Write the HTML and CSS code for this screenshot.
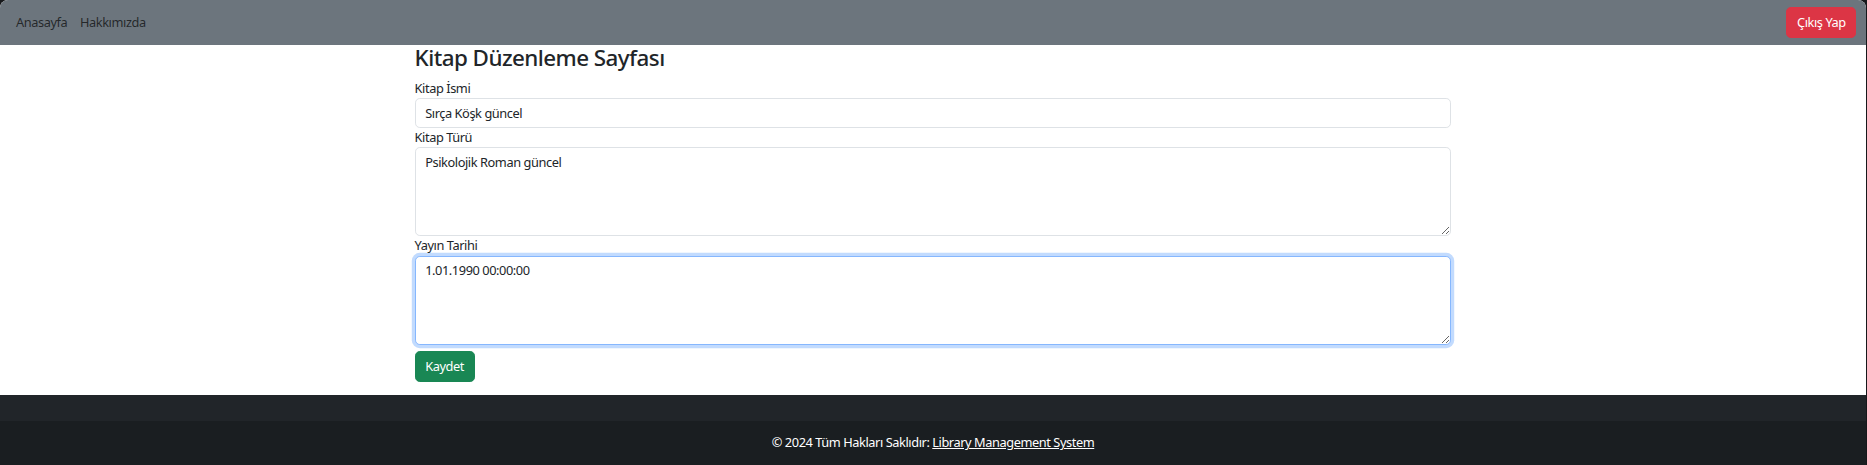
FILE: index.html
```html
<!DOCTYPE html>
<html lang="tr">
<head>
<meta charset="utf-8">
<title>Kitap Düzenleme Sayfası</title>
<link rel="stylesheet" href="styles.css">
</head>
<body>
<div class="page">
  <nav class="navbar">
    <ul class="nav">
      <li><a class="nav-link" href="#">Anasayfa</a></li>
      <li><a class="nav-link" href="#">Hakkımızda</a></li>
    </ul>
    <button class="btn btn-danger" type="button">Çıkış Yap</button>
  </nav>
  <main class="container">
    <h3 class="title">Kitap Düzenleme Sayfası</h3>
    <form class="form">
      <label class="label" for="isim">Kitap İsmi</label>
      <input class="control" id="isim" type="text" value="Sırça Köşk güncel">
      <label class="label" for="tur">Kitap Türü</label>
      <textarea class="control area" id="tur" rows="4">Psikolojik Roman güncel</textarea>
      <label class="label" for="tarih">Yayın Tarihi</label>
      <textarea class="control area" id="tarih" rows="4">1.01.1990 00:00:00</textarea>
      <button class="btn btn-success save" type="button">Kaydet</button>
    </form>
  </main>
  <footer class="footer">
    <div class="footer-top"></div>
    <div class="footer-bottom">© 2024 Tüm Hakları Saklıdır: <a class="footer-link" href="#">Library Management System</a></div>
  </footer>
</div>
<script src="script.js"></script>
</body>
</html>
```
FILE: styles.css
```css
* { box-sizing: border-box; }
html, body { margin: 0; padding: 0; }
body {
  background: #16181b;
  font-family: "Noto Sans", "Open Sans", sans-serif;
  font-size: 12.8px;
  line-height: 19.2px;
  letter-spacing: -0.43px;
  color: #212529;
  height: 465px;
  overflow: hidden;
}
.page {
  margin-right: 1px;
  background: #fff;
  border-radius: 8px 8px 0 0;
  overflow: hidden;
  min-height: 465px;
  display: flex;
  flex-direction: column;
}
.navbar {
  background: #6c757d;
  height: 44.8px;
  padding: 6.4px 9.6px;
  display: flex;
  align-items: center;
  justify-content: space-between;
}
.nav {
  list-style: none;
  margin: 0;
  padding: 0;
  display: flex;
}
.nav-link {
  display: block;
  padding: 6.4px;
  color: rgba(0, 0, 0, 0.68);
  text-decoration: none;
}
.btn {
  font-family: inherit;
  font-size: 12.8px;
  line-height: 19.2px;
  letter-spacing: -0.43px;
  padding: 4.8px 9.6px;
  border: 0.8px solid transparent;
  border-radius: 4.8px;
  color: #fff;
  cursor: pointer;
}
.btn-danger { background: #dc3545; border-color: #dc3545; }
.btn-success { background: #198754; border-color: #198754; }
.container {
  width: 1036.8px;
  margin: 0 auto;
  padding-top: 0.6px;
  padding-bottom: 12.8px;
}
.title {
  margin: 0 0 6.4px;
  font-size: 22.4px;
  line-height: 1.2;
  font-weight: 500;
  letter-spacing: -0.55px;
}
.form { display: block; }
.label { display: inline-block; }
.control {
  display: block;
  width: 100%;
  font-family: inherit;
  font-size: 12.8px;
  line-height: 19.2px;
  letter-spacing: -0.43px;
  color: #212529;
  padding: 4.8px 9.6px;
  border: 0.8px solid #dee2e6;
  border-radius: 4.8px;
  background: #fff;
  outline: none;
  margin: 0;
}
input.control { height: 30.4px; }
.area { height: 89px; resize: vertical; }
.control:focus {
  border-color: #86b7fe;
  box-shadow: 0 0 0 3.2px rgba(13, 110, 253, 0.25);
}
.save { margin-top: 6.4px; }
.footer { margin-top: auto; }
.footer-top { height: 26px; background: #212529; }
.footer-bottom {
  background: #1a1e21;
  color: #fff;
  text-align: center;
  padding: 12.8px;
  line-height: 19.2px;
}
.footer-link { color: #fff; text-decoration: underline; }
```
FILE: script.js
```js
var t = document.getElementById('tarih');
t.focus();
t.setSelectionRange(9, 9);
```
